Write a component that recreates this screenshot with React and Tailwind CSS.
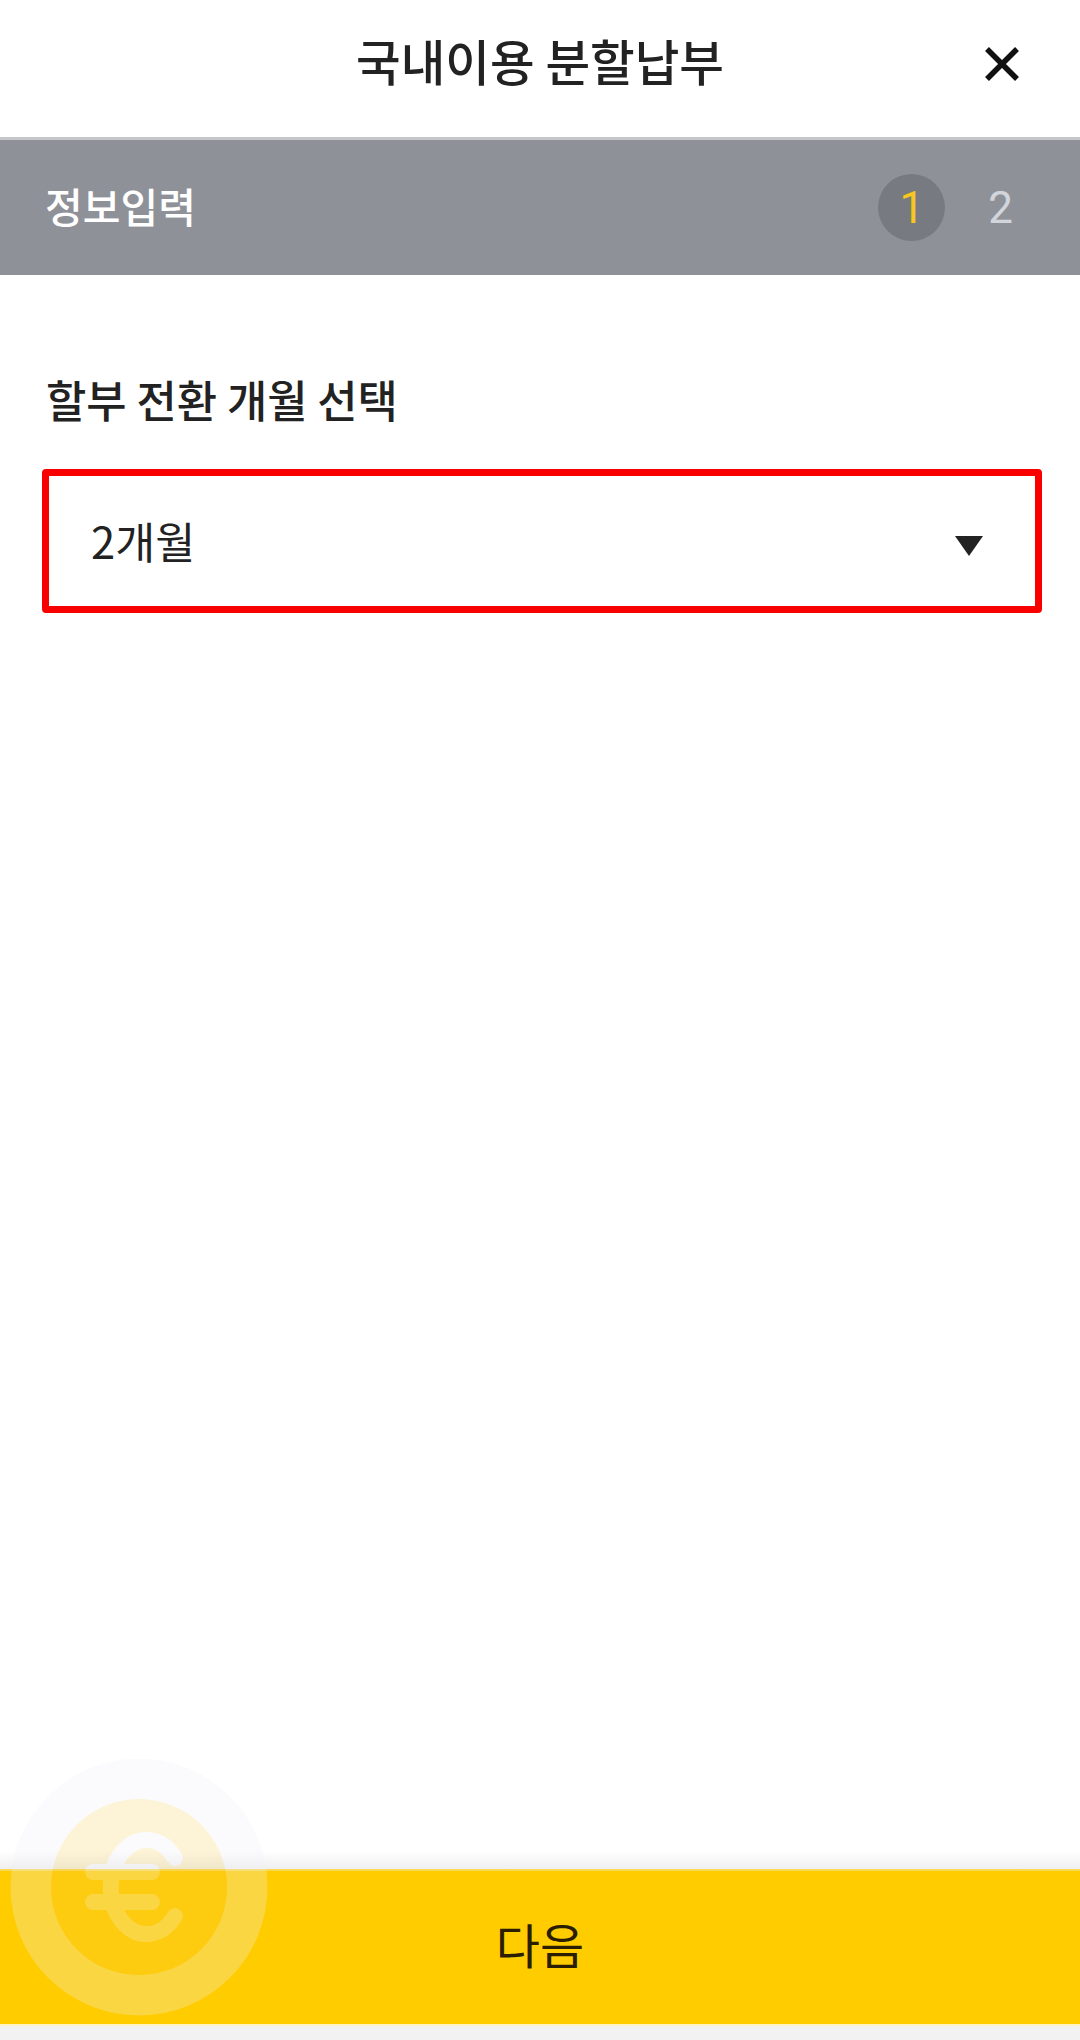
const kr = "font-['Noto_Sans_CJK_KR',sans-serif]";

function CoinBadge() {
  return (
    <svg width="260" height="258" viewBox="0 0 260 258" className="absolute left-[10px] top-[1759px]">
      <defs>
        {/* the euro sign is cut out of the inner disc, the outer ring shows through it */}
        <mask id="inner-disc">
          <rect width="260" height="258" fill="white" />
          <g fill="none" stroke="black" strokeWidth="16" strokeLinecap="round">
            <path d="M165 99 A36 47 0 1 0 165 157" />
            <path d="M83 113 H142" />
            <path d="M83 143 H142" />
          </g>
        </mask>
        <mask id="outer-ring">
          <rect width="260" height="258" fill="white" />
          <circle cx="129" cy="128" r="88" fill="black" />
          <g fill="none" stroke="white" strokeWidth="16" strokeLinecap="round">
            <path d="M165 99 A36 47 0 1 0 165 157" />
            <path d="M83 113 H142" />
            <path d="M83 143 H142" />
          </g>
        </mask>
      </defs>
      <circle cx="129" cy="128" r="128.5" fill="#f2f2f6" fillOpacity="0.27" mask="url(#outer-ring)" />
      <circle cx="129" cy="128" r="88" fill="#f8c849" fillOpacity="0.22" mask="url(#inner-disc)" />
    </svg>
  );
}

export default function App() {
  return (
    <div className={`relative flex flex-col h-[2040px] w-[1080px] overflow-hidden bg-white ${kr}`}>
      {/* header */}
      <div className="relative flex items-center justify-center h-[137px] bg-white pb-[17px]">
        <h1 className="text-[48.5px] font-medium text-[#222222] leading-none">국내이용 분할납부</h1>
        <button className="absolute right-[60px] top-[46px]">
          <svg width="36" height="36" viewBox="0 0 36 36" className="block">
            <path d="M3 3 L33 33 M33 3 L3 33" stroke="#111111" strokeWidth="5.5" fill="none" />
          </svg>
        </button>
      </div>

      {/* step bar */}
      <div className="flex items-center justify-between h-[138px] border-t-[3px] border-[#c3c7c9] bg-[#8f9199] pl-[45px] pr-[67px]">
        <span className="text-[41px] font-medium text-white leading-none pb-[4px]">정보입력</span>
        <div className="flex items-center gap-[43px] font-['Roboto',sans-serif] text-[44px] font-normal leading-none">
          <span className="flex items-center justify-center w-[67px] h-[67px] rounded-full bg-[#787a82] text-[#f6c81e]">1</span>
          <span className="text-[#d2d6dc]">2</span>
        </div>
      </div>

      {/* content */}
      <div className="flex-1 px-[42px] pt-[94px]">
        <p className="pl-[4px] text-[43.8px] font-medium text-[#222222] leading-[60px]">할부 전환 개월 선택</p>
        <div className="flex items-center justify-between h-[144px] w-[1000px] mt-[40px] border-[7px] border-[#f90000] rounded-[4px] pl-[42px] pr-[52px]">
          <span className="text-[43.5px] text-[#222222] leading-none">2개월</span>
          <svg width="28" height="20" viewBox="0 0 28 20" className="mt-[10px]">
            <path d="M0 0 H28 L14 20 Z" fill="#222222" />
          </svg>
        </div>
      </div>

      {/* footer */}
      <div className="h-[18px] bg-gradient-to-b from-white to-[#efefef]" />
      <div className="flex items-center justify-center h-[157px] border-t-[2px] border-b-[2px] border-t-[#f9d956] border-b-[#fdf3c4] bg-[#ffcc00] pb-[9px]">
        <span className="text-[48px] text-[#2a1d00] leading-none">다음</span>
      </div>
      <div className="h-[14px] bg-[#f2f2f2]" />

      <CoinBadge />
    </div>
  );
}
